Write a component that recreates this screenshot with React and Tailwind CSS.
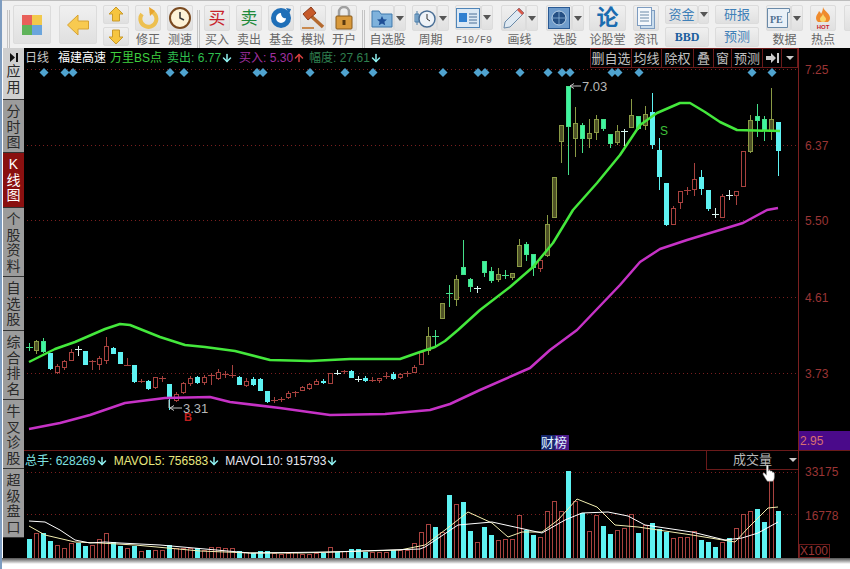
import { ArrowDown, ArrowUp } from 'lucide-react'

const FONT = "font-['Liberation_Sans','Noto_Sans_CJK_SC',sans-serif]"

// [high, bodyTop, bodyBottom, low, kind], one per 7px starting at x=29
const CANDLES = [
  [343,347,347,351,'g'],[340,341,350,354,'o'],[338,341,351,353,'g'],[353,353,368,370,'c'],[364,366,372,374,'r'],[360,361,367,370,'r'],
  [349,352,360,361,'r'],[346,349,349,356,'w'],[351,351,364,365,'c'],[360,361,361,370,'r'],[356,358,364,370,'r'],[337,346,360,364,'r'],
  [347,348,353,354,'c'],[352,352,363,364,'c'],[358,365,365,366,'r'],[365,365,381,383,'c'],[379,381,381,383,'r'],[380,381,388,390,'c'],
  [377,377,387,389,'r'],[376,378,378,382,'r'],[384,384,398,410,'c'],[392,394,400,402,'r'],[382,383,392,394,'r'],[376,378,383,386,'r'],
  [376,377,382,384,'c'],[375,377,382,385,'r'],[373,375,375,385,'r'],[369,372,378,380,'r'],[371,374,374,378,'r'],[365,375,375,378,'r'],
  [376,377,384,385,'c'],[378,381,385,387,'r'],[377,379,384,386,'c'],[378,379,390,391,'c'],[391,391,401,403,'c'],[397,400,400,403,'r'],
  [397,399,399,402,'r'],[391,393,397,399,'r'],[391,392,392,397,'r'],[386,387,390,391,'r'],[383,384,388,390,'r'],[379,381,384,385,'r'],
  [379,381,382,384,'c'],[373,373,383,384,'r'],[370,373,373,375,'w'],[370,371,371,374,'r'],[370,371,377,378,'c'],[376,379,379,382,'w'],
  [376,378,380,382,'c'],[377,380,380,382,'r'],[378,378,380,383,'r'],[372,376,376,379,'r'],[372,374,378,380,'c'],[373,374,377,379,'r'],
  [371,373,373,377,'r'],[365,367,372,373,'r'],[352,352,364,365,'r'],[327,336,350,355,'o'],[330,336,336,348,'g'],
  [303,303,318,319,'o'],[285,293,293,307,'g'],[275,279,299,306,'o'],[240,267,274,274,'g'],[278,279,286,292,'g'],[286,288,288,293,'w'],
  [261,261,272,277,'g'],[267,271,280,283,'g'],[268,274,279,282,'o'],[270,275,275,279,'g'],[273,273,277,280,'o'],[239,245,266,267,'o'],
  [242,244,254,261,'g'],[254,254,267,276,'g'],[260,260,268,272,'r'],[215,224,255,257,'o'],[177,177,217,217,'o'],[125,125,141,163,'o'],
  [86,86,126,175,'g'],[107,123,138,157,'o'],[123,125,138,153,'g'],[119,133,138,148,'o'],[115,119,132,140,'o'],[119,119,128,131,'g'],
  [134,134,143,148,'g'],[125,131,142,145,'o'],[129,131,131,146,'w'],[99,115,127,127,'o'],[116,116,128,130,'g'],[106,114,125,130,'o'],
  [93,112,144,149,'c'],[138,150,176,190,'c'],[183,183,224,226,'c'],[206,208,224,224,'r'],[191,191,202,209,'r'],[187,190,190,195,'r'],
  [163,179,189,196,'r'],[170,177,188,195,'c'],[190,190,208,211,'c'],[208,214,214,218,'w'],[194,196,217,217,'r'],[190,195,195,200,'w'],
  [191,191,195,205,'r'],[151,151,186,186,'r'],[115,120,151,153,'o'],[104,116,120,137,'g'],[116,119,130,141,'g'],[88,119,131,140,'o'],
  [122,122,150,176,'c'],
]

const COLORS = {
  r: { line: '#a8423f', fill: '#000000' },
  c: { line: '#5ef2f2', fill: '#5ef2f2' },
  g: { line: '#45e08a', fill: '#3ff5a0' },
  o: { line: '#8a9a45', fill: '#4e5226' },
  w: { line: '#d8f4f0', fill: '#d8f4f0' },
}

const DIAMONDS = [44,65,73,170,184,257,263,310,345,373,443,478,485,520,548,562,570,612,618,639,752,772]

const GREEN_MA = '29,362 55,349 75,342 105,329 120,324 130,325 160,337 185,345 205,347 235,351 270,360 310,361 350,359 400,359 420,352 435,347 445,341 458,330 480,310 510,287 533,267 553,243 573,210 597,183 620,155 640,125 657,113 680,103 690,103 705,112 720,122 737,130 780,131'
const PURPLE_MA = '29,429 60,423 90,415 125,403 165,398 210,397 230,402 280,408 330,415 385,414 430,410 450,404 480,390 530,368 550,350 577,330 620,285 640,262 660,249 687,240 743,223 767,210 778,208'

// top of each volume bar in page px, r = hollow red, c = solid cyan
const VOLUME = [
  [539,'c'],[533,'r'],[533,'c'],[541,'c'],[545,'r'],[548,'r'],[543,'r'],[543,'c'],[546,'c'],[545,'r'],[539,'r'],[533,'r'],[542,'c'],[546,'c'],
  [548,'r'],[546,'c'],[551,'r'],[550,'c'],[550,'r'],[550,'r'],[545,'c'],[548,'r'],[548,'r'],[548,'r'],[548,'c'],[550,'r'],[547,'r'],[547,'r'],
  [548,'r'],[548,'r'],[551,'c'],[552,'r'],[553,'c'],[551,'c'],[551,'c'],[553,'r'],[554,'r'],[553,'r'],[552,'r'],[554,'r'],[554,'r'],[553,'r'],
  [553,'c'],[547,'r'],[552,'c'],[551,'r'],[549,'c'],[549,'c'],[552,'c'],[552,'r'],[552,'r'],[552,'r'],[550,'c'],[550,'r'],[550,'r'],[543,'r'],
  [532,'r'],[524,'r'],[527,'c'],[532,'r'],[495,'c'],[504,'r'],[502,'c'],[531,'c'],[542,'r'],[527,'c'],[535,'c'],[540,'r'],[539,'r'],[539,'r'],
  [515,'r'],[530,'c'],[535,'c'],[537,'r'],[511,'r'],[501,'r'],[511,'r'],[471,'c'],[501,'r'],[513,'c'],[531,'r'],[515,'r'],[526,'c'],[534,'c'],
  [530,'r'],[528,'r'],[514,'r'],[533,'c'],[525,'r'],[523,'c'],[529,'c'],[532,'c'],[538,'r'],[537,'r'],[537,'r'],[531,'r'],[540,'c'],[542,'c'],
  [547,'c'],[542,'r'],[538,'c'],[528,'r'],[514,'r'],[511,'r'],[509,'c'],[522,'c'],[478,'r'],[511,'c'],
]

const MA5 = '29,526 45,535 75,542 100,543 135,545 200,551 250,553 300,553 400,550 425,545 445,530 468,512 492,523 508,537 522,532 542,532 558,520 577,499 597,507 615,525 638,527 692,535 735,542 748,528 768,508 778,507'
const MA10 = '29,521 45,522 60,530 75,540 90,543 105,542 120,543 160,545 250,553 330,552 420,549 425,547 458,525 492,522 542,533 565,520 582,513 608,512 628,516 645,525 692,532 725,540 742,538 758,533 778,522'

const TABS = [
  { text: '分时图', h: 'h-[53px]' },
  { text: 'K线图', h: 'h-[55px]', active: true },
  { text: '个股资料', h: 'h-[69px]' },
  { text: '自选股', h: 'h-[54px]' },
  { text: '综合排名', h: 'h-[69px]' },
  { text: '牛叉诊股', h: 'h-[69px]' },
  { text: '超级盘口', h: 'h-[69px]' },
]

const Box = ({ className = '', children }) => (
  <div className={`flex items-center justify-center rounded-[2px] border border-[#dcdcdc] bg-gradient-to-b from-[#f0f0f0] to-[#e0e0e0] ${className}`}>
    {children}
  </div>
)

const DropCaret = () => (
  <svg width="8" height="5" viewBox="0 0 8 5"><path d="M0 0h8L4 5z" fill="#555" /></svg>
)

const ToolBtn = ({ w = 'w-[26px]', ml, label, drop, children }) => (
  <div className={`flex flex-col items-center shrink-0 ${w} ${ml}`}>
    <div className="flex w-full h-[26px]">
      <Box className="flex-1 h-full">{children}</Box>
      {drop && <Box className="w-[12px] h-full"><DropCaret /></Box>}
    </div>
    <span className="text-[12px] leading-[15px] mt-[2px] text-[#666] whitespace-nowrap">{label}</span>
  </div>
)

const Sep = ({ ml }) => (
  <div className={`shrink-0 w-[3px] h-[40px] mt-[5px] border-x border-[#c4c4c4] ${ml}`} />
)

const Arrow = ({ rotate }) => (
  <svg width="16" height="17" viewBox="0 0 16 17" className={rotate}>
    <path d="M8 1l7 7h-3.500v7h-7v-7H1z" fill="#f6c53f" stroke="#c99a2c" />
  </svg>
)

const Hand = () => (
  <svg width="15" height="18" viewBox="0 0 17 21">
    <path d="M5 1.500c1-.8 2 0 2 1v6l.500-1c1-.8 2 0 2 .8l.300.200c1-.5 2 0 2 1l.300.300c1-.4 2 .2 2 1.200v4.500c0 2-1 4-2 4.500H6c-1-1-2-3-3-4.500L1 12c-.5-1 .5-2 1.500-1.500L5 13z" fill="#fff" stroke="#999" strokeWidth=".6" />
  </svg>
)

const MainChart = () => (
  <svg width="774" height="382" viewBox="24 68 774 382" className="block">
    {[69, 145, 220, 297, 373].map((y) => (
      <line key={y} x1="27" x2="798" y1={y + 0.5} y2={y + 0.5} stroke="#7a1f1f" strokeDasharray="1 3" />
    ))}
    {DIAMONDS.map((x) => (
      <path key={x} d={`M${x} 68l4.500 4.500-4.500 4.500-4.500-4.500z`} fill="#4fa3cf" />
    ))}
    <g shapeRendering="crispEdges">
      {CANDLES.map(([hi, top, bot, lo, kind], i) => {
        const x = 29 + i * 7
        const c = COLORS[kind]
        return (
          <g key={i}>
            <line x1={x + 0.5} x2={x + 0.5} y1={hi} y2={lo} stroke={c.line} />
            {top === bot ? (
              <line x1={x - 3} x2={x + 4} y1={top + 0.5} y2={top + 0.5} stroke={c.line} />
            ) : (
              <rect x={x - 1.5} y={top + 0.5} width="4" height={bot - top} fill={c.fill} stroke={c.line} />
            )}
          </g>
        )
      })}
    </g>
    <polyline points={GREEN_MA} fill="none" stroke="#44e83c" strokeWidth="2.500" strokeLinejoin="round" />
    <polyline points={PURPLE_MA} fill="none" stroke="#c632c6" strokeWidth="2.500" strokeLinejoin="round" />
    <path d="M570 86h11M570 86l4-2.500M570 86l4 2.500" stroke="#c4c4c4" fill="none" />
    <text x="582" y="91" fontSize="13" fill="#b8b8b8">7.03</text>
    <path d="M169 400v8M170 408h12M170 408l4-2.500M170 408l4 2.500" stroke="#c4c4c4" fill="none" />
    <text x="183" y="413" fontSize="13" fill="#b8b8b8">3.31</text>
    <text x="184" y="421" fontSize="11" fontWeight="700" fill="#c0201f">B</text>
    <text x="660" y="135" fontSize="12" fill="#3fc03a">S</text>
    <rect x="541" y="435" width="14" height="15" fill="#17276e" />
    <rect x="555" y="435" width="14" height="15" fill="#4a1a8a" />
    <text x="541" y="447" fontSize="13" fill="#dff4ff">财榜</text>
  </svg>
)

const VolumeChart = () => (
  <svg width="774" height="88" viewBox="24 470 774 88" className="block">
    {[472, 514].map((y) => (
      <line key={y} x1="27" x2="798" y1={y + 0.5} y2={y + 0.5} stroke="#7a1f1f" strokeDasharray="1 3" />
    ))}
    <g shapeRendering="crispEdges">
      {VOLUME.map(([top, kind], i) => {
        const x = 29 + i * 7
        return kind === 'c' ? (
          <rect key={i} x={x - 2} y={top} width="5" height={558 - top} fill="#5ef2f2" />
        ) : (
          <rect key={i} x={x - 1.5} y={top + 0.5} width="4" height={558 - top} fill="#000" stroke="#a8423f" />
        )
      })}
    </g>
    <polyline points={MA5} fill="none" stroke="#f2eeb0" strokeWidth="1" />
    <polyline points={MA10} fill="none" stroke="#ffffff" strokeWidth="1" />
  </svg>
)

const AxisLabels = ({ height, top, items }) => (
  <svg width="51" height={height} viewBox={`0 ${top} 51 ${height}`} className="block">
    {items.map(([y, t]) => (
      <text key={t} x="6" y={y + 5} fontSize="12" fill="#9a3535">{t}</text>
    ))}
  </svg>
)

export default function App() {
  return (
    <div className={`w-[850px] h-[569px] overflow-hidden bg-white border-l-2 border-[#7d9cc0] ${FONT}`}>
      {/* toolbar */}
      <div className="flex h-[48px] bg-[#f0f0f0] border-t border-[#bdbdbd] pt-[4px] overflow-hidden">
        <Sep ml="ml-[5px]" />
        <Box className="w-[38px] h-[39px] ml-[3px] shrink-0">
          <svg width="20" height="20" viewBox="0 0 22 22">
            <rect width="11" height="11" fill="#e8605a" />
            <rect x="11" width="11" height="11" fill="#f2c94c" />
            <rect y="11" width="11" height="11" fill="#5fb35a" />
            <rect x="11" y="11" width="11" height="11" fill="#6ba5dc" />
          </svg>
        </Box>
        <Box className="w-[38px] h-[39px] ml-[8px] shrink-0">
          <svg width="24" height="24" viewBox="0 0 24 24">
            <path d="M1.500 12L12 2v6h10.500v8H12v6z" fill="#f8ca50" stroke="#d6a233" />
          </svg>
        </Box>
        <div className="flex flex-col gap-[3px] ml-[6px] shrink-0">
          <Box className="w-[26px] h-[19px]"><Arrow /></Box>
          <Box className="w-[26px] h-[19px]"><Arrow rotate="rotate-180" /></Box>
        </div>
        <ToolBtn ml="ml-[6px]" label="修正">
          <svg width="22" height="22" viewBox="0 0 22 22">
            <path d="M13 4a8 8 0 1 1-8 3" fill="none" stroke="#edc050" strokeWidth="4" />
            <path d="M12 0l6 4-5 5z" fill="#e8a52e" />
          </svg>
        </ToolBtn>
        <ToolBtn ml="ml-[6px]" label="测速">
          <svg width="22" height="22" viewBox="0 0 22 22">
            <circle cx="11" cy="11" r="10" fill="#fdf3d8" stroke="#7a4a20" strokeWidth="2" />
            <path d="M11 5v6l4 2" fill="none" stroke="#333" strokeWidth="1.500" />
          </svg>
        </ToolBtn>
        <Sep ml="ml-[4px]" />
        <ToolBtn ml="ml-[4px]" label="买入">
          <span className="text-[17px] leading-none text-[#c8222a]">买</span>
        </ToolBtn>
        <ToolBtn ml="ml-[6px]" label="卖出">
          <span className="text-[17px] leading-none text-[#1f8a3a]">卖</span>
        </ToolBtn>
        <ToolBtn ml="ml-[6px]" label="基金">
          <svg width="22" height="22" viewBox="0 0 22 22">
            <circle cx="11" cy="11" r="10" fill="#1f6fb8" />
            <path d="M11 6a5 5 0 1 0 5 5c-3 1-5-2-5-5z" fill="#fff" />
            <path d="M16 1l5 1-2 5z" fill="#1f6fb8" />
          </svg>
        </ToolBtn>
        <ToolBtn ml="ml-[6px]" label="模拟">
          <svg width="24" height="24" viewBox="0 0 24 24">
            <path d="M10 10l12 11" stroke="#b4692e" strokeWidth="3.500" />
            <path d="M2 8l8-7 5 6-8 7z" fill="#c65a2a" stroke="#8a3a1a" />
            <path d="M1 22h12" stroke="#c98a50" strokeWidth="2" />
          </svg>
        </ToolBtn>
        <ToolBtn ml="ml-[5px]" label="开户">
          <svg width="20" height="24" viewBox="0 0 20 24">
            <path d="M5 11V6a5 5 0 0 1 10 0v5" fill="none" stroke="#a0a0a0" strokeWidth="2.500" />
            <rect x="2" y="10" width="16" height="13" rx="1" fill="#d99a3c" stroke="#8a5a1a" />
            <rect x="8.500" y="14" width="3" height="5" fill="#5a3a10" />
          </svg>
        </ToolBtn>
        <Sep ml="ml-[5px]" />
        <ToolBtn w="w-[37px]" ml="ml-[4px]" label="自选股" drop>
          <svg width="22" height="20" viewBox="0 0 22 20">
            <path d="M1 3h7l2 3h11v13H1z" fill="#7fb2dc" stroke="#3f78ac" />
            <path d="M11 8l1.500 3.200 3.500.300-2.600 2.300.8 3.400-3.200-1.800-3.200 1.800.8-3.400L6 11.500l3.500-.300z" fill="#1f4f96" />
          </svg>
        </ToolBtn>
        <ToolBtn w="w-[37px]" ml="ml-[6px]" label="周期" drop>
          <svg width="22" height="22" viewBox="0 0 22 22">
            <path d="M3 4v14M1 7h4v8H1z" fill="#9ec6e6" stroke="#4a7ca8" />
            <circle cx="13" cy="12" r="8" fill="#eef3f8" stroke="#4a6f96" strokeWidth="1.500" />
            <path d="M13 7v5l3 2" fill="none" stroke="#333" />
          </svg>
        </ToolBtn>
        <ToolBtn w="w-[38px]" ml="ml-[6px]" label={<span className="font-['Liberation_Mono',monospace] text-[10px]">F10/F9</span>} drop>
          <svg width="24" height="20" viewBox="0 0 24 20">
            <rect x=".5" y=".5" width="23" height="19" fill="#dbe8f4" stroke="#4f85b8" />
            <rect x="3" y="5" width="8" height="9" fill="#2f7fd0" />
            <path d="M13 6h8M13 9h8M13 12h8M13 15h8" stroke="#4a6f96" />
          </svg>
        </ToolBtn>
        <ToolBtn w="w-[37px]" ml="ml-[8px]" label="画线" drop>
          <svg width="22" height="22" viewBox="0 0 22 22">
            <path d="M16 1l5 5L7 20l-6 1 1-6z" fill="#dfe9f2" stroke="#6a8aa8" />
            <path d="M16 1l5 5-2 2-5-5z" fill="#d85a4a" />
          </svg>
        </ToolBtn>
        <ToolBtn w="w-[38px]" ml="ml-[8px]" label="选股" drop>
          <svg width="22" height="22" viewBox="0 0 22 22">
            <rect x=".5" y=".5" width="21" height="21" fill="#6f9ccc" stroke="#2a5a94" />
            <circle cx="11" cy="11" r="7" fill="#244f84" stroke="#bcd4ea" />
            <path d="M11 4v14M4 11h14" stroke="#8fb6da" strokeWidth=".8" />
          </svg>
        </ToolBtn>
        <ToolBtn w="w-[37px]" ml="ml-[5px]" label="论股堂">
          <span className="text-[22px] leading-none font-bold text-[#1b6cb0]">论</span>
        </ToolBtn>
        <ToolBtn ml="ml-[7px]" label="资讯">
          <svg width="18" height="22" viewBox="0 0 18 22">
            <rect x="3.500" y="3.500" width="14" height="18" fill="#c9dcec" stroke="#7d9cc0" />
            <rect x=".5" y=".5" width="14" height="18" fill="#f4f8fc" stroke="#7d9cc0" />
            <path d="M3 5h9M3 8h9M3 11h9M3 14h9" stroke="#6a8aa8" />
          </svg>
        </ToolBtn>
        <div className="flex flex-col gap-[3px] ml-[6px] shrink-0 w-[44px]">
          <div className="flex h-[19px]">
            <Box className="flex-1 h-full text-[13px] text-[#3f80b8]">资金</Box>
            <Box className="w-[11px] h-full"><DropCaret /></Box>
          </div>
          <Box className="h-[20px] text-[12px] font-bold font-['Liberation_Serif',serif] text-[#1b5f9e]">BBD</Box>
        </div>
        <div className="flex flex-col gap-[3px] ml-[6px] shrink-0 w-[44px]">
          <Box className="h-[19px] text-[13px] text-[#3f80b8]">研报</Box>
          <Box className="h-[20px] text-[13px] text-[#3f80b8]">预测</Box>
        </div>
        <ToolBtn w="w-[37px]" ml="ml-[7px]" label="数据" drop>
          <svg width="23" height="20" viewBox="0 0 23 20">
            <path d="M.5.500h22v4h-2v15H.5z" fill="#e9f0f7" stroke="#6a8aa8" />
            <text x="3" y="15" fontSize="10" fontWeight="700" fontFamily="Liberation Serif" fill="#4f6f90">PE</text>
          </svg>
        </ToolBtn>
        <ToolBtn ml="ml-[7px]" label="热点">
          <svg width="22" height="23" viewBox="0 0 22 23">
            <path d="M11 0c1 4 7 6 7 11 0 2-1 3-2 4H6c-1-1-2-2-2-4 0-3 2-4 3-7 1 1 2 2 2 3 1-2 2-4 2-7z" fill="#ef8a2c" />
            <path d="M11 6c0 3 3 4 3 6s-1 3-3 3-3-1-3-3 3-3 3-6z" fill="#f9d56a" />
            <text x="11" y="22" textAnchor="middle" fontSize="6" fontWeight="700" fill="#c8222a">HOT</text>
          </svg>
        </ToolBtn>
        <ToolBtn ml="ml-[8px]" label="新">
          <span />
        </ToolBtn>
      </div>

      {/* workspace */}
      <div className="flex h-[510px] ml-[1px] bg-black">
        <div className="flex flex-col w-[21px] shrink-0 text-[14px] leading-[15.5px] text-[#2a2a2a]">
          <div className="flex flex-col items-center h-[52px] pt-[5px] bg-[#cfcfcf] border-b border-[#333]">
            <svg width="10" height="9" viewBox="0 0 10 9" className="mb-[2px]"><path d="M1 0l5 4.500L1 9zM7 0h2v9H7z" fill="#111" /></svg>
            <span className="w-[14px] text-center">应用</span>
          </div>
          {TABS.map((tab) => (
            <div
              key={tab.text}
              className={`flex justify-center pt-[4px] border-b border-[#333] ${tab.h} ${tab.active ? 'bg-[#8a1010] text-white' : 'bg-[#9c9c9c]'}`}
            >
              <span className="w-[14px] text-center">{tab.text}</span>
            </div>
          ))}
        </div>

        <div className="relative w-[774px] shrink-0 flex flex-col">
          <div className="flex h-[20px] items-center text-[12px] whitespace-nowrap">
            <span className="ml-[1px] text-[#c8c8c8]">日线</span>
            <span className="ml-[9px] text-white">福建高速</span>
            <span className="ml-[4px] text-[#3fd03f]">万里BS点</span>
            <span className="ml-[5px] text-[#2fbf4f]">卖出: 6.77</span>
            <ArrowDown size={12} strokeWidth={3} className="text-[#8ff0f0]" />
            <span className="ml-[6px] text-[#a030a0]">买入: 5.30</span>
            <ArrowUp size={12} strokeWidth={3} className="text-[#d84040]" />
            <span className="ml-[4px] text-[#2f7f4f]">幅度: 27.61</span>
            <ArrowDown size={12} strokeWidth={3} className="text-[#8ff0f0]" />
            <div className="flex h-full ml-auto border border-[#6a1a1a] text-[#c0c0c0] text-[13px] divide-x divide-[#6a1a1a]">
              <span className="w-[41px] text-center">删自选</span>
              <span className="w-[30px] text-center">均线</span>
              <span className="w-[32px] text-center">除权</span>
              <span className="w-[20px] text-center">叠</span>
              <span className="w-[18px] text-center">窗</span>
              <span className="w-[31px] text-center">预测</span>
              <span className="flex w-[19px] items-center justify-center">
                <svg width="13" height="10" viewBox="0 0 13 10"><path d="M0 3h5V0l5 5-5 5V7H0zM11 0h2v10h-2z" fill="#ccc" /></svg>
              </span>
              <span className="flex w-[15px] items-center justify-center">
                <svg width="8" height="4" viewBox="0 0 8 4"><path d="M0 0h8L4 4z" fill="#ccc" /></svg>
              </span>
            </div>
          </div>
          <MainChart />
          <div className="flex h-[20px] items-center text-[12px] whitespace-nowrap border-t border-[#6a1a1a]">
            <span className="ml-[1px] text-[#7fe0e0]">总手: 628269</span>
            <ArrowDown size={12} strokeWidth={3} className="text-[#8ff0f0]" />
            <span className="ml-[6px] text-[#e8e87f]">MAVOL5: 756583</span>
            <ArrowDown size={12} strokeWidth={3} className="text-[#8ff0f0]" />
            <span className="ml-[5px] text-[#e6e6f0]">MAVOL10: 915793</span>
            <ArrowDown size={12} strokeWidth={3} className="text-[#8ff0f0]" />
            <div className="flex items-center w-[92px] h-full ml-auto border-l border-b border-[#6a1a1a] text-[13px] text-[#b8b8b8]">
              <span className="ml-[26px]">成交量</span>
              <svg width="8" height="4" viewBox="0 0 8 4" className="ml-[17px]"><path d="M0 0h8L4 4z" fill="#ccc" /></svg>
            </div>
          </div>
          <VolumeChart />
          <div className="absolute left-[738px] top-[416px]"><Hand /></div>
        </div>

        <div className="flex flex-col w-[52px] shrink-0 border-l border-[#7a2020]">
          <AxisLabels height={383} top={48} items={[[69, '7.25'], [145, '6.37'], [220, '5.50'], [297, '4.61'], [373, '3.73']]} />
          <div className="flex items-center h-[19px] pl-[1px] bg-[#4a0a8a] text-[12px] text-[#d87070]">2.95</div>
          <div className="relative flex-1 border-t border-[#6a1a1a]">
            <AxisLabels height={90} top={451} items={[[471, '33175'], [515, '16778']]} />
            <span className="absolute left-0 bottom-0 w-[31px] h-[14px] border border-[#6a1a1a] text-[12px] leading-[12px] text-[#9a3535]">X100</span>
          </div>
        </div>
      </div>

      {/* window shadow */}
      <div className="h-[6px] bg-gradient-to-b from-[#555555] to-white" />
    </div>
  )
}
